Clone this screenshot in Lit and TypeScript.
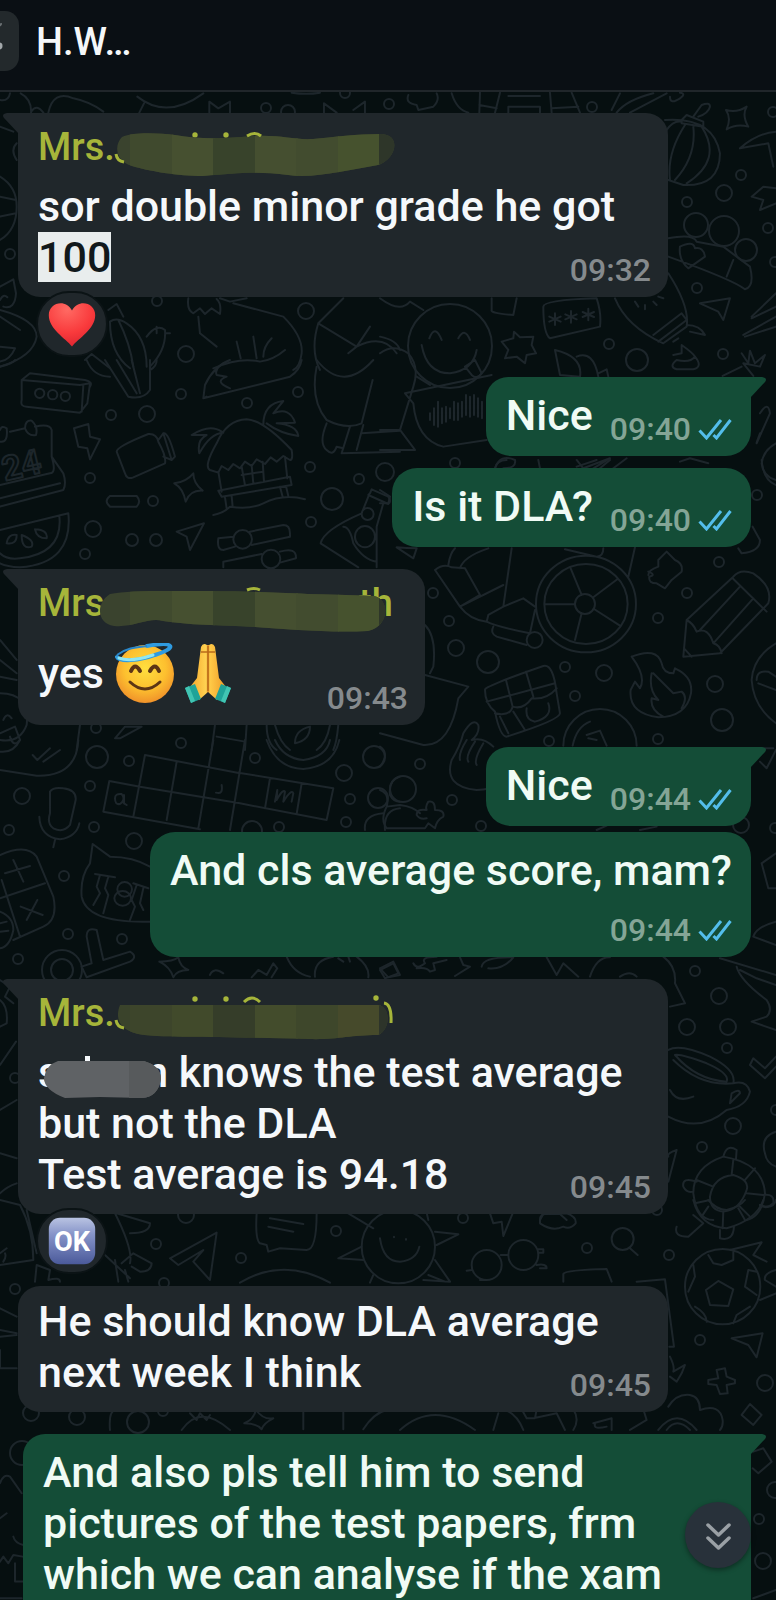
import { LitElement, html, svg, css, nothing } from "lit";
import { customElement, property } from "lit/decorators.js";

type Glyph = "halo" | "pray" | "heart" | "ok";

const glyphs = {
  heart: svg`
    <defs><radialGradient id="h" cx=".4" cy=".15" r=".9"><stop offset="0" stop-color="#ff6a63"/><stop offset=".6" stop-color="#f93a3c"/><stop offset="1" stop-color="#dc2430"/></radialGradient></defs>
    <path fill="url(#h)" d="M30 58C22 48 1 36 1 19C1 3 22-2 30 13C38-2 59 3 59 19C59 36 38 48 30 58Z"/>`,
  ok: svg`
    <defs><linearGradient id="o" x2="0" y2="1"><stop offset="0" stop-color="#b9c3e2"/><stop offset=".35" stop-color="#8795c9"/><stop offset="1" stop-color="#4b5a9b"/></linearGradient></defs>
    <rect x="1" y="1" width="58" height="58" rx="14" fill="url(#o)"/>
    <text x="30" y="43" text-anchor="middle" font-size="34" font-weight="700" fill="#fff">OK</text>`,
  halo: svg`
    <defs><radialGradient id="f" cx=".5" cy=".4" r=".6"><stop offset="0" stop-color="#ffdf3f"/><stop offset=".6" stop-color="#fdc02f"/><stop offset="1" stop-color="#f0922a"/></radialGradient></defs>
    <circle cx="30" cy="31" r="29" fill="url(#f)"/>
    <path d="M16 28q4-9 9 0M35 28q5-9 9 0" fill="none" stroke="#5c3515" stroke-width="4" stroke-linecap="round"/>
    <path d="M15 39q15 14 30 0" fill="none" stroke="#5c3515" stroke-width="3" stroke-linecap="round"/>
    <path d="M2 14C4 19 24 18 40 12C50 9 57 5 55 3C53 0 43 1 32 3" fill="none" stroke="#2f9be0" stroke-width="4" stroke-linecap="round"/>
    <path d="M2 12C12 4 24 4 32 3" fill="none" stroke="#2a86c8" stroke-width="2"/>
    <path d="M4 15C12 18 26 16 38 12" fill="none" stroke="#8fe6f2" stroke-width="3" stroke-linecap="round"/>`,
  pray: svg`
    <defs><linearGradient id="p"><stop offset="0" stop-color="#f6a52b"/><stop offset=".45" stop-color="#ffd352"/><stop offset=".5" stop-color="#d98420"/><stop offset=".55" stop-color="#ffcb48"/><stop offset="1" stop-color="#ef9a26"/></linearGradient></defs>
    <path fill="url(#p)" d="M23 4q2-5 6-2h2q4-3 6 2l4 31 7 9-9 13-9-8-9 8-9-13 7-9z"/>
    <path d="M30 3V48M23 9h14" stroke="#b96b1a" stroke-width="1.5" fill="none"/>
    <path fill="#1fa398" d="M7 45l10-4 6 15-10 4zM53 45l-10-4-6 15 10 4z"/>
    <path fill="#41c4b2" d="M7 45l4-2 6 15-4 2zM53 45l-4-2-6 15 4 2z"/>`,
};

@customElement("emoji-glyph")
class EmojiGlyph extends LitElement {
  @property() name: Glyph = "heart";
  @property() label = "";
  static styles = css`
    :host { display: inline-block; }
    svg { display: block; width: 100%; height: 100%; font-family: Roboto, sans-serif; }
  `;
  render() {
    return html`<svg viewBox="0 0 60 60" role="img" aria-label=${this.label}>${glyphs[this.name]}</svg>`;
  }
}

/* Hand-smeared cover over a sender's name. */
interface Smear { lead: string; path: string; marks: string; dots: number[][]; tail?: string; tone: string[]; }

const bands = [78, 92, 134, 175, 217, 258, 300, 341];
const olive = ["#3a432e", "#404a2e", "#465030", "#38432b", "#454f30", "#424c2f", "#46522e", "#2e3629"];

const smears: Record<string, Smear> = {
  first: {
    lead: "Mrs.",
    path: "M84 14C95 9 120 10 137 12C165 17 190 15 217 13C245 12 255 17 275 16C295 14 320 11 341 11C365 10 358 37 340 42C310 47 275 56 250 52C220 48 200 50 165 53C140 53 110 48 94 43C77 38 76 22 84 14Z",
    marks: "M78 31q1 7 8 8M209 13q8-5 14 0",
    dots: [[157, 12], [188, 12]],
    tone: olive,
  },
  second: {
    lead: "Mrs",
    path: "M72 15C90 11 130 12 160 12C200 12 225 13 270 15C300 16 320 16 336 17C352 20 352 47 330 52C290 54 250 50 217 48C180 46 150 46 125 42C110 38 95 49 76 47C58 44 58 24 72 15Z",
    marks: "M209 11q7-3 13 0",
    dots: [],
    tail: "th",
    tone: olive,
  },
  third: {
    lead: "Mrs.",
    path: "M82 16H340C354 18 352 42 340 46C310 46 300 51 270 50C240 49 215 49 180 48C150 47 125 49 100 45C78 40 78 26 82 16Z",
    marks: "M78 31q1 7 8 8M206 13q8-8 16 0M346 14Q354 15 353 34",
    dots: [[157, 10], [188, 10], [338, 9]],
    tone: ["#3a432b", "#3d452b", "#414a2b", "#353d29", "#434c2c", "#3e472b", "#464a2b", "#2d342a"],
  },
};

@customElement("sender-name")
class SenderName extends LitElement {
  @property() variant = "first";
  static styles = css`
    :host { display: block; position: relative; width: 370px; max-width: 100%; font-size: 38px; line-height: 48px; font-weight: 500; color: #a6b53a; margin-bottom: 10px; }
    svg { position: absolute; left: 0; top: 0; width: 370px; height: 58px; overflow: visible; }
  `;
  render() {
    const s = smears[this.variant];
    return html`<span>${s.lead}</span><svg viewBox="0 0 370 58" aria-hidden="true">
      <clipPath id="c"><path d=${s.path}/></clipPath>
      ${s.tail ? svg`<text x="321" y="37" font-size="38" fill="#a6b53a">${s.tail}</text>` : nothing}
      ${s.dots.map(([x, y]) => svg`<circle cx=${x} cy=${y} r="2.7" fill="#a6b53a"/>`)}
      <g clip-path="url(#c)">
        <rect x="50" width="330" height="58" fill=${s.tone[0]}/>
        ${bands.slice(1).map((x, i) => svg`<rect x=${x} width="43" height="58" fill=${s.tone[i + 1]}/>`)}
      </g>
      <path d=${s.marks} fill="none" stroke="#a6b53a" stroke-width="3"/>
    </svg>`;
  }
}

const dots = [
  [345,93,5],[266,108,5],[288,112,7],[10,254,5],[157,301,5],[306,311,8],[186,354,8],[389,104,5],[592,107,5],[773,112,5],
  [741,175,5],[724,193,8],[687,202,5],[696,225,12],[724,231,15],[746,250,11],[768,228,5],[775,262,5],[697,288,5],[609,344,5],
  [637,360,11],[723,354,5],[455,463,5],[385,472,9],[111,415,5],[147,414,8],[181,394,5],[247,403,5],[298,392,5],[310,467,5],
  [359,479,5],[332,499,11],[311,522,5],[90,478,5],[153,501,5],[93,529,8],[132,540,6],[156,540,6],[85,554,5],[96,728,5],
  [181,743,5],[757,495,5],[719,562,5],[687,593,5],[658,618,5],[433,593,5],[449,621,5],[456,648,8],[488,662,11],[565,667,5],
  [604,673,8],[575,696,5],[715,684,8],[722,720,11],[549,741,5],[658,739,5],[420,764,5],[403,789,13],[452,800,5],[481,826,5],
  [741,825,8],[775,828,5],[97,757,11],[129,761,5],[22,796,8],[90,786,5],[9,830,5],[94,827,5],[134,841,8],[64,876,5],
  [68,934,5],[122,939,5],[18,959,5],[255,758,5],[344,773,8],[374,757,11],[350,799,5],[378,798,10],[346,822,5],[279,827,5],
  [252,831,10],[62,970,11],[62,970,20],[15,1078,5],[695,971,5],[719,996,8],[687,1027,8],[728,1027,8],[727,1048,5],[733,1126,8],
  [702,1147,5],[657,1210,5],[776,1110,5],[156,1244,5],[186,1215,8],[241,1258,5],[336,1231,5],[164,1283,5],[15,1289,5],[31,1413,8],
  [77,1417,8],[163,1411,5],[138,1422,11],[22,1453,12],[463,1218,5],[587,1248,5],[669,1255,5],[700,1340,5],[765,1383,8],[759,1519,5],
  [763,1561,8],[775,1490,8],
];

/* Doodle outlines, one group per region of the wallpaper, drawn at triple scale. */
const doodles: [number, number, string][] = [
  [0, 0, "M0 300Q25 305 30 280M62 280Q100 300 92 350M94 334Q110 310 130 338M145 338Q160 270 220 295Q270 305 310 335M412 290Q500 360 610 280M432 310L418 338M875 278Q920 285 960 278M628 338V305L655 325L690 305V338M972 338V310L1010 338M1060 330L1095 305V338M50 430Q30 450 50 480M0 530Q50 560 50 620Q50 690 0 720M0 590L48 600M0 650L48 640M0 380L40 395M0 860L40 838L48 880Q45 930 10 920M0 900Q10 880 22 892M0 930Q110 960 110 1010Q100 1070 0 1100M0 950L60 990M0 1040L45 1045Q30 1080 0 1085M325 930L350 912L370 950M330 965Q350 950 380 970Q440 1010 440 1100M330 965Q330 1060 390 1105M355 960Q390 1030 400 1100M440 1010Q470 970 495 990Q500 1050 450 1100M470 980V1000M500 1000L510 1000M255 1080L275 1062L330 1105M565 895Q560 930 580 940L600 925L615 942L635 925L660 942Q665 910 650 897M595 950L600 1000L650 1040M700 910L850 950Q910 1010 905 1060Q900 1100 880 1110M640 1105Q720 1070 780 1085Q820 1080 855 1050M710 1025L722 1075M760 1010L770 1075M815 1015Q790 1040 790 1070M660 895L690 905L740 895M1030 895L955 970L1070 1040L1110 980M1045 1060L1070 1040Q1150 1000 1190 1060M955 970Q930 1050 960 1110"],
  [380, 80, "M85 45Q75 70 110 75L115 90L160 80Q180 60 170 40M215 40Q230 90 265 98M300 38L298 98M360 38L345 98M298 75L350 85M385 48H480M385 80H480V98M385 98V80M510 38L515 98M515 85L595 80M575 38L600 98M720 40L695 90M860 40L750 98M820 40Q740 60 710 98M870 50Q870 75 900 55Q920 40 900 38M905 120L920 105L970 125V140L905 130ZM940 110L965 75Q990 65 990 80Q985 100 955 110M855 120Q1000 110 1020 220Q1020 320 910 315L865 300M915 135Q860 220 870 300M940 140Q950 230 885 300M965 140Q1030 240 920 310M860 150Q880 120 905 125M1038 90Q1070 100 1100 80Q1085 105 1105 140Q1070 130 1040 148Q1055 115 1038 90ZM1080 205Q1130 160 1188 155M1080 205L1165 190L1180 260M1115 350L1150 320L1188 325M1115 350L1150 360L1140 390L1188 370M865 475Q940 460 950 485L1030 500L1110 560Q1125 620 1095 628Q1060 600 865 530M900 500Q940 480 945 505Q970 500 975 530L925 565Q895 540 900 500M1060 540L1040 590M865 580Q930 680 920 740L850 790Q740 740 705 655M820 765L905 700L920 720L835 785M920 735Q960 735 975 765L930 755M880 785L895 775M960 670L1050 655L1030 720L1015 695ZM1115 710L1188 640M1115 715L1188 680M1090 765L1188 710M1095 770L1188 740M765 665L775 680M795 675V688M820 665L830 675M835 650L850 655M335 655V690Q330 700 400 705L410 655M490 680Q490 660 650 655Q665 700 660 740L510 775Q490 760 490 680M525 700V735M508 710L542 725M542 710L508 725M573 693V728M556 703L590 718M590 703L556 718M625 686V721M608 696L642 711M642 696L608 711M0 655Q60 700 90 665L130 690M148 775Q165 730 185 780M235 775Q255 740 270 780M125 795Q140 880 210 880Q280 870 290 810M255 860L285 840L305 880Q290 900 275 885ZM365 785L400 775L402 755L420 772L460 770L455 795L468 820L440 825L435 850L410 830L375 835L385 810ZM525 810Q610 830 600 890L540 885ZM590 830Q640 810 655 890M655 880L680 868L685 890M880 825L905 820L905 795Q940 820 945 830Q970 860 940 868H890Q865 860 890 840Q930 850 945 830M1028 888L1085 860M1085 820L1105 850L1110 812L1125 850L1155 825L1140 860L1090 850L1120 888M0 770Q50 780 60 810M0 820Q40 790 85 820Q120 860 100 920L60 1050L105 1110H0M110 890L150 915M75 940L335 885M75 940L100 970Q110 1080 190 1100L320 1080M150 1000V1020M162 985V1035M174 965V1040M186 985V1030M198 980V1025M210 985V1015M222 965V1020M234 970V1020M246 965V1010M258 945V1005M270 950V1010M282 945V1005M294 955V1010M306 965V1015M0 1050H60M1140 1000Q1165 960 1170 1000L1130 1090M1140 1060L1130 1088M1188 1090Q1150 1110 1145 1150Q1150 1190 1188 1200M345 1165Q360 1120 405 1140Q410 1165 370 1165M590 1140L610 1165L690 1135L640 1165M740 1135L700 1165M900 1145L930 1135L985 1150"],
  [0, 360, "M0 20Q40 10 45 0M260 0Q280 50 330 50M315 0L385 110Q430 120 450 90V0M350 0L410 100M395 0L420 100M450 30Q470 20 470 0M65 60L240 75L270 70L262 130L240 158L80 140Q60 140 65 120ZM65 60L90 40L255 60Q280 65 270 80M250 75L245 155M105 100a14 14 0 1 0 28 0a14 14 0 1 0-28 0M144 104a14 14 0 1 0 28 0a14 14 0 1 0-28 0M182 109a14 14 0 1 0 28 0a14 14 0 1 0-28 0M0 210Q5 195 20 205Q25 250 0 245M30 215L75 205M105 200Q150 190 155 210L155 290L190 340Q200 370 190 390L0 440M75 205Q75 180 95 182Q115 200 108 225Q85 230 75 205M0 415L180 370M155 290Q170 340 150 340L0 375M222 205L265 192L270 230L300 238L270 298L262 265L235 260ZM350 275Q350 260 445 222Q470 220 475 245Q500 290 495 310L400 352Q380 360 375 340ZM475 240L490 220Q505 215 525 290L515 300L490 290M490 220L515 300M330 408H410Q425 424 410 440H330Q310 424 330 408M523 370Q560 365 580 340Q580 370 608 392Q570 390 557 425Q550 385 523 370M530 515L612 490L570 570L560 530ZM620 110L610 115L615 75Q640 20 690 0M610 115L870 50Q900 30 905 0M690 0Q640 20 650 45L680 50Q640 65 690 85M630 330Q610 320 650 250Q680 180 740 178Q790 180 875 270Q880 300 870 300L850 288L830 305L812 292L795 312L770 298L755 318L735 305L720 325L700 312L685 330L665 318L655 338ZM665 215Q630 190 575 225L620 225Q590 240 598 280Q630 220 670 218M790 195Q790 130 850 123L820 160Q870 140 885 188L830 190Q890 195 895 228Q840 220 800 190M655 335L665 395M855 290L862 355M655 392L870 350L875 375L665 410ZM725 320L735 375M755 315L760 370M788 305L792 365M725 345L790 335M675 412L680 445M695 408L698 440M840 380L848 410M858 378L865 408M640 465Q670 460 690 440Q750 450 790 430Q850 400 915 418M655 535L700 530M655 535Q650 570 670 570L705 560M750 515L850 495Q870 495 870 520L870 530L755 555M700 538a28 28 0 1 0 56 0a28 28 0 1 0-56 0M670 622V605L785 582M840 575Q890 560 888 595L840 608M785 597a28 28 0 1 0 56 0a28 28 0 1 0-56 0M1110 400L1115 388L1165 410Q1175 425 1165 432L1105 405ZM1105 410L1085 460Q970 510 962 550L1075 622M1150 430L1130 500V622M1030 500Q1050 500 1060 550Q1090 600 1130 605M1065 530a30 32 0 1 0 60 0a30 32 0 1 0-60 0M1085 462a18 18 0 1 0 36 0a18 18 0 1 0-36 0M950 20Q930 120 980 180Q1040 210 1085 190L1118 60M980 190Q955 250 980 270Q1000 290 1010 260L1030 265M1050 200L1025 280L1200 275M1090 195L1070 270M1085 220L1200 212M950 0Q1030 100 1120 0M205 460L0 510M205 460Q220 610 60 622Q20 620 0 610M178 468Q190 580 60 595Q20 600 0 580M20 550Q25 520 50 525Q50 555 20 550M65 525Q105 540 95 560Q65 570 65 525M105 508Q145 510 140 535Q110 535 105 508M0 840L50 900M0 900L50 940M0 950L50 960M0 1000Q90 1000 80 1095Q60 1150 0 1140M10 1080Q20 1055 35 1075M0 1120L45 1100L60 1140Q40 1165 30 1130M240 1095L230 1170M345 1135L375 1100H425L360 1135ZM645 1095L635 1170M740 1095L735 1170M650 1130L735 1145M800 1095Q800 1150 830 1170M825 1095Q840 1150 870 1170M990 1095Q980 1150 950 1170M1015 1095Q1010 1150 1000 1170M885 1150Q885 1110 930 1100Q930 1140 885 1150"],
  [380, 460, "M345 25Q350 0 380 0M480 25L475 0M590 20L650 0M660 25L690 0M1145 0Q1150 60 1188 75M0 90L30 110L25 130H0M50 262Q80 265 110 265L100 295ZM205 315Q210 280 225 265M240 325Q250 290 325 265M395 265L370 440L430 415L465 440M165 330Q190 310 215 322L255 325L300 405L240 440ZM240 440L370 375M240 440Q270 480 320 485L325 465L370 440M320 485Q350 500 450 520L465 450M340 500Q330 520 350 530L440 555M440 540a24 24 0 1 0 48 0a24 24 0 1 0-48 0M555 268L650 290Q670 290 670 265M765 262L745 350M468 432a150 145 0 1 0 300 0a150 145 0 1 0-300 0M493 432a125 120 0 1 0 250 0a125 120 0 1 0-250 0M585 432a30 30 0 1 0 60 0a30 30 0 1 0-60 0M605 405L572 325M640 412L712 358M642 447L720 497M605 460L585 540M585 433H495M805 345Q805 330 835 320V300L860 275L885 300Q910 310 905 335L875 360L855 385L830 370Q805 370 808 350Q830 345 805 335M1075 265L1085 280Q1140 275 1140 240L1118 200M920 480L1060 350Q1080 325 1120 340Q1180 380 1165 430L1020 580L910 590ZM1058 355L1160 455M1080 380L960 510M1120 415L1000 550M920 480Q940 490 950 515Q985 500 1000 550Q1020 555 1025 580M912 565L935 590M755 590Q830 560 845 610Q850 640 880 640L885 625Q940 650 933 700Q920 770 835 772Q745 760 752 690L765 665L780 685Q800 650 755 590M815 640Q805 690 835 720L815 715Q810 750 850 770M820 640Q870 690 880 700L905 695Q925 710 905 745M1188 550Q1120 590 1115 660Q1120 740 1188 790M1130 660Q1130 630 1165 635L1188 650M1135 670L1188 690M315 690Q310 680 490 618Q520 610 530 700L540 760Q540 780 380 830Q360 830 345 755Q315 730 315 690ZM320 725L525 670M378 660L398 740M438 635L460 710M345 760Q390 770 398 740Q430 750 455 715Q500 720 530 685M360 770L385 820M400 755L435 810M440 745Q435 780 465 785Q520 770 505 730M135 495Q170 530 160 620L150 640M135 645L265 680L235 715Q210 860 130 855L0 820M550 857A108 108 0 0 1 770 857M578 857Q590 800 630 785M620 825L660 812L680 857M625 835L650 840M215 900Q240 860 250 820Q280 770 295 795Q300 820 275 840Q310 830 340 860M260 840Q235 880 240 900M285 845Q255 890 265 905M310 850Q280 900 290 915M215 900Q190 980 290 990Q310 990 330 985M0 860Q30 880 0 920M1140 905L1160 925L1188 870M1145 865H1180M0 990Q30 1000 20 1040L60 1035Q100 1040 120 1060M20 1040Q0 1080 20 1105H135L145 1090L165 1105Q170 1080 190 1070Q195 1050 165 1050Q165 1020 145 1025Q135 1040 140 1050Q110 1045 110 1065Q120 1080 140 1075M650 1110L680 1097M780 1110L830 1100"],
  [0, 740, "M235 0Q230 110 110 107L0 90M60 0Q40 40 0 35M98 45L112 60L150 25M130 65L180 30M150 155Q160 140 190 145Q230 150 227 180L210 255Q190 280 160 265Q140 250 150 220ZM118 230Q120 290 180 298Q230 290 238 250M165 300L160 322M328 123L420 140M328 123L310 215L600 268M420 140L720 190L980 240L1000 145L715 98M435 45L400 230M435 45L720 100M530 65L500 240M640 0L595 265M735 0L690 270M810 115L795 205M905 130L890 222M345 175Q345 160 365 162Q378 180 360 192Q345 195 345 175M372 165V190L380 195M665 135Q670 165 648 158M825 185L832 150L830 180Q850 145 855 155L850 185Q875 145 880 160L875 185M800 0Q830 85 910 87Q1000 80 1018 0M825 0Q850 55 910 60Q980 50 990 0M1200 110Q1165 120 1170 165Q1180 185 1200 185M1095 270Q1090 225 1150 220M1155 270Q1150 210 1200 205M0 345Q80 310 110 350L160 470Q175 540 130 560L40 600M5 420L60 590M0 475L135 430M15 400L90 378M40 360L70 425M62 500L128 525M112 480L80 540M0 515Q40 530 40 570Q30 620 0 625M0 550L20 545M0 575L25 572M270 370L278 312L330 350Q400 350 450 380M270 370Q240 410 245 470Q260 550 450 545M285 402L345 412M300 405L290 440L300 460L280 495M325 410L315 445L325 465L310 520M352 448a22 22 0 1 0 44 0a22 22 0 1 0-44 0M343 475a25 22 0 1 0 50 0a25 22 0 1 0-50 0M400 430L445 445M410 435L395 480L405 500L390 540M430 445L420 490L430 510M260 590Q260 560 290 570L310 660L390 635Q415 650 390 665L260 712L245 680L275 670ZM478 665Q520 665 535 652Q540 680 565 690Q530 690 520 712Q510 680 478 665M630 705Q640 680 670 700M755 712L775 690L800 705L820 670L832 685L815 712M860 650Q880 700 930 710M945 710Q940 660 1000 650M1070 650Q1110 680 1105 712M1015 655L1030 665M1045 650L1050 665M1140 685L1180 665L1200 705L1165 712ZM0 720L30 740L15 770L40 790M0 780Q25 800 20 850L0 860M48 905L0 975"],
  [380, 820, "M0 450L40 430L55 460L15 475ZM100 430Q110 450 135 430Q120 410 170 410M110 445Q140 440 150 455L165 450L160 430L200 420M240 412L250 435L270 440L225 468M305 440Q310 410 400 412Q370 450 325 445M500 412L530 465L550 430L595 470M630 470Q650 410 690 412M850 410Q890 440 885 490L915 550L870 560M720 470Q750 450 770 470M1020 415L1188 465M1188 305Q1130 320 1120 350L1188 375M1145 130L1188 100M1145 130L1165 205L1188 205M1070 440Q1080 480 1160 540Q1180 570 1160 590L1115 605L1188 630M1080 450L1130 475L1188 495M865 690Q900 670 990 710Q1070 750 1060 790Q960 800 880 720M885 705Q900 700 980 730Q1050 760 1040 785Q950 780 885 705M1060 790Q1100 780 1110 815Q1100 860 1040 870Q960 940 865 890M1050 850L1055 820Q1080 805 1080 820ZM870 810Q890 850 940 830M1110 735L1120 715L1155 745L1188 710M1110 735L1155 775L1188 740M1188 935Q1140 950 1155 1000Q1160 1030 1188 1040M865 1085L890 990Q860 1000 865 1010M1030 1010Q1040 970 1070 990L1068 1018M1030 1010Q940 1040 940 1120Q950 1200 1000 1200M1030 1010Q1150 1030 1155 1120Q1145 1190 1100 1200M990 1130Q1000 1070 1060 1065Q1110 1080 1100 1110Q1080 1170 1030 1175Q990 1170 990 1130M1055 1065L1060 1020M1095 1080L1125 1045M1100 1120L1150 1125M1075 1155L1110 1190M1000 1100L950 1080M990 1140L945 1150M950 1085Q905 1070 910 1100Q920 1120 940 1115M1150 1125Q1185 1120 1180 1150Q1160 1170 1140 1155M480 1200L490 1182H540L560 1200"],
  [0, 1090, "M0 60L50 30M0 190L50 205M0 310Q20 290 50 280M0 330L60 345Q100 420 100 510L0 525M80 360L110 490M0 490L20 475M10 515Q20 500 15 490M0 655L50 680M0 720L50 730M0 740L50 735M0 780V835H50M105 575L110 525L150 540L145 570Q180 560 180 575M345 370Q400 480 390 520M350 370L450 400Q450 430 390 430M315 495L390 565M365 520L400 490L455 520Q455 545 420 545L395 530M345 510L355 575M375 540L385 575M510 505L650 428L630 570L580 515L610 480L535 525ZM770 370Q765 450 780 460L800 465L805 485L840 475L920 480Q950 480 950 370M810 385L910 402M805 410L880 425M1045 370L1120 415M1085 470L1015 505L1090 510M1120 555L1110 578M720 578Q850 500 990 578M330 1020Q325 960 350 957M545 1020Q600 940 690 1020M570 970L590 990L600 970L620 990L630 975M733 1000Q760 990 768 960Q790 990 820 985Q790 1000 785 1018Q770 1000 733 1000M910 960V1018M1030 960V1018M1090 1018Q1120 970 1160 960M65 1210L30 1160Q10 1150 0 1180M0 1285L20 1270M70 1365Q45 1360 40 1340M0 1415L10 1400L25 1420L40 1395L68 1400M45 1420V1475H68M0 1525H65"],
  [380, 1200, "M-55 140a110 110 0 1 0 220 0a110 110 0 1 0-220 0M0 115Q10 185 60 185Q110 180 118 140M42 110v2M78 117v2M165 95L235 103L170 135M165 180L210 245L130 240M145 225L195 245M140 38L145 60M330 40L340 70L365 65L370 108L398 40M480 60Q480 40 500 42L560 40Q590 50 587 70Q570 90 550 80L535 85Q510 90 480 70ZM275 195a45 45 0 1 0 90 0a45 45 0 1 0-90 0M385 165a45 45 0 1 0 90 0a45 45 0 1 0-90 0M362 165H385M475 148H490V158H475M470 195Q500 190 500 205L480 205M275 210L260 212M300 240H315M695 117a33 33 0 1 0 66 0a33 33 0 1 0-66 0M750 145L773 165M550 245V222Q555 210 680 207L695 245M770 245L855 238L882 440L868 440M890 80Q880 110 925 110L970 70L940 45M940 0Q960 80 1040 85Q1130 60 1150 0M985 0Q1010 30 1040 30Q1080 20 1095 0M1030 35L1028 85M1075 25L1095 60M985 20L965 50M1020 90V115Q1060 125 1062 80M1140 15Q1180 30 1188 0M915 260a113 113 0 1 0 226 0a113 113 0 1 0-226 0M1015 243L1060 268L1045 318L990 315L978 270ZM985 165L1000 190L1025 195L1060 180V155M940 195L945 230L925 275M1105 210L1095 260L1130 285M1105 210L1130 215M945 320Q980 340 980 365M1110 320L1070 345L1060 370M1050 150L1145 127L1120 165L1160 185M1188 210Q1150 220 1155 240L1188 260M1140 300L1188 280M1055 415L1148 400L1130 472L1105 435ZM870 470Q885 500 880 515L915 495L905 520L890 545L870 530M985 540L1015 535L1010 510L1035 505L1040 530L1065 540V550L1040 555L1043 580L1020 582L1010 555L985 552ZM1085 645L1110 612L1145 645L1120 675ZM865 620Q890 580 930 585Q960 590 960 630Q1020 610 1028 660Q1030 680 1020 690M790 628L800 660L750 690M835 690Q890 620 950 690M860 690Q890 650 930 690M60 690Q160 600 285 690M340 690L355 640M370 628Q410 640 430 690M425 628L440 655H465L470 628M460 655L530 640L555 690M580 628Q600 660 580 690M640 670L695 655V690M645 672Q640 690 680 680M1120 755L1150 745L1175 785L1135 820L1118 805M1120 1195L1188 1170"],
];

@customElement("chat-wallpaper")
class ChatWallpaper extends LitElement {
  static styles = css`
    :host { display: block; }
    svg { display: block; width: 100%; height: 100%; }
    .line { fill: none; stroke: #1d262b; stroke-linecap: round; stroke-linejoin: round; }
    .date { font-size: 34px; font-weight: 700; stroke-width: 2px; }
  `;
  render() {
    return html`<svg viewBox="0 92 776 1508" preserveAspectRatio="xMidYMin slice" aria-hidden="true">
      <g class="line" stroke-width="2">${dots.map(([x, y, r]) => svg`<circle cx=${x} cy=${y} r=${r}/>`)}
        <circle cx="450" cy="346" r="42"/>
        <text class="date" transform="translate(5 481) rotate(-13)">24</text></g>
      ${doodles.map(([x, y, d]) => svg`<path class="line" stroke-width="6" transform="translate(${x} ${y}) scale(.3333)" d=${d}/>`)}
    </svg>`;
  }
}

@customElement("chat-message")
class ChatMessage extends LitElement {
  @property({ type: Boolean, reflect: true }) out = false;
  @property({ type: Boolean }) tail = false;
  @property() time = "";
  @property() layout: "inline" | "below" | "tucked" = "tucked";
  @property() sender = "";
  @property() reaction = "";
  @property() reactionLabel = "";
  static styles = css`
    :host { display: flex; flex-direction: column; align-items: flex-start; }
    :host([out]) { align-items: flex-end; }
    .bubble { position: relative; box-sizing: border-box; display: flex; flex-direction: column; background: #20272b; border-radius: 22px; padding: 10px 17px 8px 20px; max-width: calc(100% - 83px); color: #f5f8fb; }
    .out { background: #144d37; color: #f0fbf5; border-radius: 25px; padding: 13px 19px 8px 20px; max-width: calc(100% - 5px); }
    .tailed { border-top-left-radius: 0; }
    .out.tailed { border-top-left-radius: 22px; border-top-right-radius: 0; }
    .text { font-size: 43px; line-height: 51px; margin-bottom: 6px; }
    .out .text { margin-bottom: 7px; }
    .meta { align-self: flex-end; display: flex; align-items: center; gap: 7px; font-size: 32px; line-height: 38px; color: #858a8d; font-weight: 500; }
    .out .meta { color: #84a596; }
    .tucked .meta { margin-top: -38px; }
    .below .meta { margin-top: 8px; }
    .inline { flex-direction: row; gap: 17px; }
    .ticks { width: 34px; height: 22px; }
    .tip { position: absolute; top: 0; left: -15px; width: 16px; height: 22px; fill: #20272b; }
    .out .tip { left: auto; right: -15px; fill: #144d37; transform: scaleX(-1); }
    .reaction { position: relative; width: 72px; height: 66px; margin: -6px 0 -2px 18px; padding: 0; border: 2px solid #0b1315; border-radius: 34px; background: #20272b; display: grid; place-items: center; }
    .reaction emoji-glyph { width: 48px; height: 48px; }
  `;
  render() {
    return html`<article class="bubble ${this.layout} ${this.out ? "out" : ""} ${this.tail ? "tailed" : ""}">
        ${this.tail ? html`<svg class="tip" viewBox="0 0 16 22" aria-hidden="true"><path d="M16 0H4Q-2 1 1 5L16 21Z"/></svg>` : nothing}
        ${this.sender ? html`<sender-name variant=${this.sender}></sender-name>` : nothing}
        <div class="text"><slot></slot></div>
        <div class="meta"><time>${this.time}</time>${this.out
          ? html`<svg class="ticks" viewBox="0 0 34 22" role="img" aria-label="Read"><path d="M1.500 12.500L8.500 20L23 2M15.500 17L18.500 20L32.500 2" fill="none" stroke="#53bdeb" stroke-width="3"/></svg>`
          : nothing}</div>
      </article>
      ${this.reaction ? html`<button class="reaction" aria-label="${this.reactionLabel} reaction"><emoji-glyph name=${this.reaction} label=${this.reactionLabel}></emoji-glyph></button>` : nothing}`;
  }
}

@customElement("app-root")
class AppRoot extends LitElement {
  static styles = css`
    :host { position: relative; display: flex; flex-direction: column; height: 100vh; overflow: hidden; background: #060f10; font-family: Roboto, "Noto Sans", sans-serif; font-weight: 500; }
    header { display: flex; align-items: center; gap: 17px; box-sizing: border-box; height: 92px; flex: none; padding-bottom: 8px; background: #0a0f14; border-bottom: 2px solid #20262a; }
    .back { width: 60px; height: 60px; margin-left: -41px; padding: 0; border: 0; border-radius: 14px; background: #23292c; }
    .back svg { display: block; width: 60px; height: 60px; }
    h1 { margin: 0; padding-top: 2px; font-size: 38px; line-height: 46px; font-weight: 500; color: #f5f7f9; }
    main { position: relative; flex: 1; min-height: 0; overflow: hidden; }
    chat-wallpaper { position: absolute; inset: 0; }
    .thread { position: relative; display: flex; flex-direction: column; padding: 21px 25px 0 18px; }
    .turn { margin-top: 22px; }
    .near { margin-top: 12px; }
    .close { margin-top: 6px; }
    .after { margin-top: 14px; }
    mark { background: #e9eded; color: #11181b; }
    .emoji { width: 60px; height: 60px; margin: 6px 0 8px; vertical-align: -23px; }
    .emoji + .emoji { margin-left: 3px; }
    .cover { position: relative; width: 84px; height: 38px; vertical-align: -10px; overflow: visible; }
    .jump { position: absolute; right: 25px; bottom: 32px; width: 66px; height: 66px; padding: 0; border: 0; border-radius: 50%; background: #28313a; box-shadow: 0 2px 5px rgba(0, 0, 0, .4); }
    .jump svg { display: block; width: 66px; height: 66px; }
  `;
  render() {
    return html`
      <header>
        <button class="back" aria-label="Back"><svg viewBox="0 0 60 60" aria-hidden="true"><path d="M38 15q3 0 4-2" fill="none" stroke="#6a7073" stroke-width="2" stroke-linecap="round"/><circle cx="40" cy="35" r="3.500" fill="#a3a8ab"/></svg></button>
        <h1>H.W…</h1>
      </header>
      <main>
        <chat-wallpaper></chat-wallpaper>
        <div class="thread">
          <chat-message tail sender="first" time="09:32" reaction="heart" reactionLabel="Heart">sor double minor grade he got <mark>100</mark></chat-message>
          <chat-message class="turn" out tail layout="inline" time="09:40">Nice</chat-message>
          <chat-message class="near" out layout="inline" time="09:40">Is it DLA?</chat-message>
          <chat-message class="turn" tail sender="second" time="09:43">yes <emoji-glyph class="emoji" name="halo" label="Smiling face with halo"></emoji-glyph><emoji-glyph class="emoji" name="pray" label="Folded hands"></emoji-glyph></chat-message>
          <chat-message class="turn" out tail layout="inline" time="09:44">Nice</chat-message>
          <chat-message class="close" out layout="below" time="09:44">And cls average score, mam?</chat-message>
          <chat-message class="turn" tail sender="third" time="09:45" reaction="ok" reactionLabel="OK">s<svg class="cover" viewBox="0 0 84 38" aria-hidden="true"><path d="M-2 2H84Q101 7 101 20Q98 38 82 39L40 38L5 39Q-16 31-16 19Q-14 6-2 2Z" fill="#5f6265"/><path d="M69 2H84Q101 7 101 20Q98 38 82 39H69Z" fill="#575a5c"/><path d="M25-3h5v5h-5z" fill="#f5f8fb"/></svg>n knows the test average but not the DLA<br>Test average is 94.18</chat-message>
          <chat-message class="after" time="09:45">He should know DLA average next week I think</chat-message>
          <chat-message class="turn" out tail layout="below">And also pls tell him to send pictures of the test papers, frm which we can analyse if the xam</chat-message>
        </div>
        <button class="jump" aria-label="Jump to latest"><svg viewBox="0 0 66 66" aria-hidden="true"><path d="M23 23L33.500 33L44 23M23 36L33.500 46L44 36" fill="none" stroke="#9aa0a5" stroke-width="3.500" stroke-linecap="round" stroke-linejoin="round"/></svg></button>
      </main>`;
  }
}
